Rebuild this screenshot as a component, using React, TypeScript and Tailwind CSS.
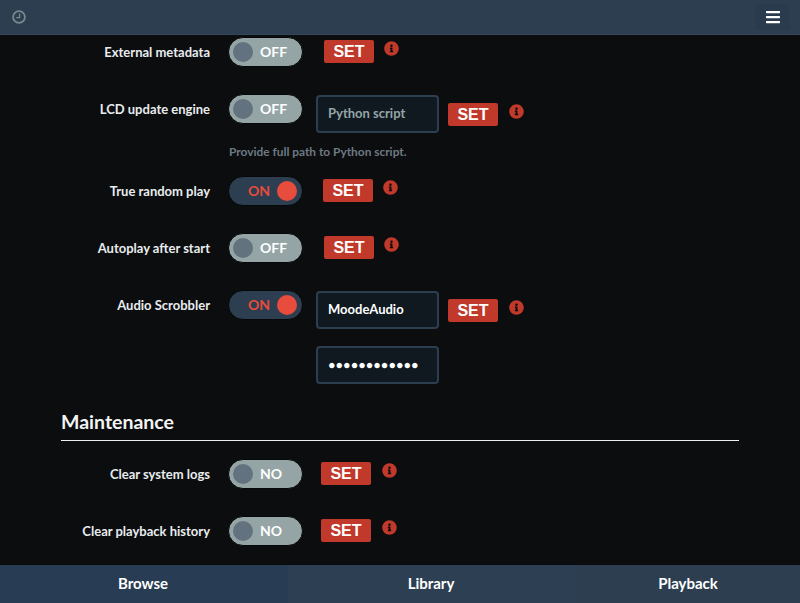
import React from "react";
import { FaInfoCircle, FaBars } from "react-icons/fa";

function Toggle({ on, text }: { on?: boolean; text: string }) {
  if (on) {
    return (
      <div className="-my-px flex h-[30px] w-[75px] shrink-0 items-center justify-end gap-[7px] rounded-full border border-[#060708] bg-[#2c3e50] pr-[5px] text-[14px] font-bold text-[#e74c3c]">
        <span className="pb-[2px]">{text}</span>
        <span className="h-[20px] w-[20px] rounded-full bg-[#e74c3c]" />
      </div>
    );
  }
  return (
    <div className="-my-px flex h-[30px] w-[75px] shrink-0 items-center gap-[7px] rounded-full border border-[#060708] bg-[#95a5a6] pl-[4px] text-[14px] font-bold text-white">
      <span className="h-[20px] w-[20px] rounded-full bg-[#62727e]" />
      <span className="pb-[2px]">{text}</span>
    </div>
  );
}

function SetInfo({ gap, infoGap = "ml-[10px]" }: { gap: string; infoGap?: string }) {
  return (
    <div className={`flex items-start ${gap}`}>
      <button className="mt-[2px] flex h-[23px] w-[50px] items-center justify-center rounded-[2px] bg-[#c0392b] font-['Liberation_Sans'] text-[16px] font-bold text-white">
        SET
      </button>
      <FaInfoCircle className={`${infoGap} mt-[3px] text-[15px] text-[#c0392b]`} />
    </div>
  );
}

function Field({ value, muted, password }: { value: string; muted?: boolean; password?: boolean }) {
  return (
    <div className={`flex h-[38px] w-[123px] items-center rounded-[4px] border-2 border-[#2c3e50] bg-[#101820] pl-[10px] text-[13px] font-bold ${muted ? "text-[#95a5a6]" : "text-white"}`}>
      {password ? <span className="font-['Liberation_Sans'] text-[12.5px]">{value}</span> : value}
    </div>
  );
}

function Row({ label, children, className = "" }: { label: string; children: React.ReactNode; className?: string }) {
  return (
    <div className={`flex items-start ${className}`}>
      <div className="mt-[5px] w-[149px] shrink-0 text-right text-[13px] font-bold leading-[18px] text-[#e8ecef]">{label}</div>
      <div className="ml-[18px] flex items-start">{children}</div>
    </div>
  );
}

export default function App() {
  return (
    <div className="flex h-[603px] w-[800px] flex-col overflow-hidden bg-[#0c0d0e] font-['Lato',sans-serif]">
      <header className="flex h-[35px] shrink-0 items-center justify-between border-b border-[#34465a] bg-[#2c3e50] pl-[12px] pr-[10px]">
        <svg width="14" height="14" viewBox="0 0 14 14" fill="none" stroke="#78898c" strokeWidth="1.8">
          <circle cx="7" cy="7" r="5.9" />
          <path d="M7.6 3.4V7.6H4.2" strokeWidth="1.3" />
        </svg>
        <button className="flex h-[26px] w-[35px] items-center justify-center rounded-[4px] bg-[#2a3b4d]">
          <FaBars className="text-[16px] text-white" />
        </button>
      </header>

      <main className="flex-1 px-[61px] pt-[3px]">
        <Row label="External metadata">
          <Toggle text="OFF" />
          <SetInfo gap="ml-[21px]" />
        </Row>

        <Row label="LCD update engine" className="mt-[29px]">
          <Toggle text="OFF" />
          <div className="ml-[13px]"><Field value="Python script" muted /></div>
          <div className="mt-[6px]"><SetInfo gap="ml-[9px]" infoGap="ml-[11px]" /></div>
        </Row>
        <p className="ml-[168px] mt-[11px] text-[11.9px] font-bold leading-[16px] text-[#6c7a85]">Provide full path to Python script.</p>

        <Row label="True random play" className="mt-[17px]">
          <Toggle on text="ON" />
          <SetInfo gap="ml-[20px]" />
        </Row>

        <Row label="Autoplay after start" className="mt-[29px]">
          <Toggle text="OFF" />
          <SetInfo gap="ml-[21px]" />
        </Row>

        <Row label="Audio Scrobbler" className="mt-[29px]">
          <Toggle on text="ON" />
          <div className="ml-[13px] flex flex-col gap-[17px]">
            <Field value="MoodeAudio" />
            <Field value="●●●●●●●●●●●●" password />
          </div>
          <div className="mt-[6px]"><SetInfo gap="ml-[9px]" infoGap="ml-[11px]" /></div>
        </Row>

        <h2 className="mt-[26px] border-b border-[#ecf0f1] pb-[6px] text-[19.5px] font-bold leading-[24px] text-[#f2f4f5]">Maintenance</h2>

        <Row label="Clear system logs" className="mt-[19px]">
          <Toggle text="NO" />
          <SetInfo gap="ml-[18px]" infoGap="ml-[11px]" />
        </Row>

        <Row label="Clear playback history" className="mt-[29px]">
          <Toggle text="NO" />
          <SetInfo gap="ml-[18px]" infoGap="ml-[11px]" />
        </Row>
      </main>

      <footer className="flex h-[39px] shrink-0 border-t border-[#0a0b0c] text-[15px] font-bold text-white">
        <div className="flex w-[288px] items-center justify-center bg-[#283c53] pb-[2px] pr-[2px]">Browse</div>
        <div className="flex w-[288px] items-center justify-center bg-[#2d3f53] pb-[2px] pr-[2px]">Library</div>
        <div className="flex w-[224px] items-center justify-center bg-[#2c3e50] pb-[2px]">Playback</div>
      </footer>
    </div>
  );
}
